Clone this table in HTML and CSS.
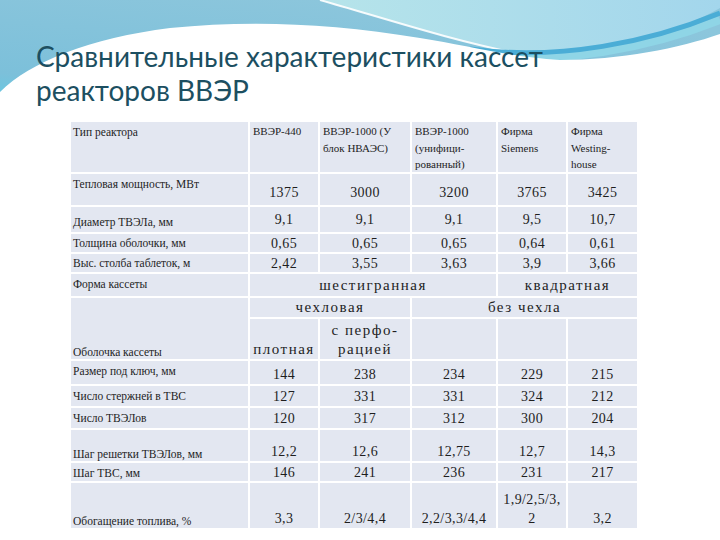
FILE: index.html
```html
<!DOCTYPE html>
<html lang="ru">
<head>
<meta charset="utf-8">
<title>Сравнительные характеристики кассет реакторов ВВЭР</title>
<link rel="stylesheet" href="styles.css">
</head>
<body>
<div class="slide">
  <svg class="bg" width="720" height="130" viewBox="0 0 720 130" aria-hidden="true">
    <defs>
      <linearGradient id="gBase" x1="0" y1="1" x2="0.5" y2="0">
        <stop offset="0" stop-color="#4fd3ea"/>
        <stop offset="0.35" stop-color="#7cc0da"/>
        <stop offset="1" stop-color="#8cc6dc"/>
      </linearGradient>
      <linearGradient id="gLight" x1="0" y1="0" x2="1" y2="0">
        <stop offset="0" stop-color="#b6e4ea"/>
        <stop offset="1" stop-color="#a3d6ec"/>
      </linearGradient>
    </defs>
    <rect x="0" y="0" width="720" height="130" fill="url(#gBase)"/>
    <path d="M320,0 C390,20 450,40 520,54 C600,56 670,36 720,8 V0 Z" fill="url(#gLight)"/>
    <path d="M320,0 C390,20 450,40 520,54" fill="none" stroke="#ffffff" stroke-width="2" opacity="0.9"/>
    <path d="M470,54 C560,66 650,48 720,20" fill="none" stroke="#8fd5e6" stroke-width="8"/>
    <path d="M470,49 C560,61 650,42 720,13" fill="none" stroke="#4badd6" stroke-width="5"/>
    <path d="M0,92 C30,62 90,38 170,28 C250,20 330,23 420,38 C470,46 510,57 560,60 C620,60 680,48 720,34 V130 H0 Z" fill="#ffffff"/>
  </svg>

  <h1 class="title">Сравнительные характеристики кассет<br>реакторов ВВЭР</h1>

  <div class="table">
    <!-- row 1 -->
    <div class="c lbl top">Тип реактора</div>
    <div class="c hd">ВВЭР-440</div>
    <div class="c hd">ВВЭР-1000 (У<br>блок НВАЭС)</div>
    <div class="c hd">ВВЭР-1000<br>(унифици-<br>рованный)</div>
    <div class="c hd">Фирма<br>Siemens</div>
    <div class="c hd">Фирма<br>Westing-<br>house</div>

    <!-- row 2 -->
    <div class="c lbl top">Тепловая мощность, МВт</div>
    <div class="c num low">1375</div>
    <div class="c num low">3000</div>
    <div class="c num low">3200</div>
    <div class="c num low">3765</div>
    <div class="c num low">3425</div>

    <!-- row 3 -->
    <div class="c lbl low">Диаметр ТВЭЛа, мм</div>
    <div class="c num low">9,1</div>
    <div class="c num low">9,1</div>
    <div class="c num low">9,1</div>
    <div class="c num low">9,5</div>
    <div class="c num low">10,7</div>

    <!-- row 4 -->
    <div class="c lbl">Толщина оболочки, мм</div>
    <div class="c num">0,65</div>
    <div class="c num">0,65</div>
    <div class="c num">0,65</div>
    <div class="c num">0,64</div>
    <div class="c num">0,61</div>

    <!-- row 5 -->
    <div class="c lbl">Выс. столба таблеток, м</div>
    <div class="c num">2,42</div>
    <div class="c num">3,55</div>
    <div class="c num">3,63</div>
    <div class="c num">3,9</div>
    <div class="c num">3,66</div>

    <!-- row 6 -->
    <div class="c lbl top">Форма кассеты</div>
    <div class="c word span3">шестигранная</div>
    <div class="c word span2">квадратная</div>

    <!-- row 7 / 8 -->
    <div class="c lbl bot rspan2">Оболочка кассеты</div>
    <div class="c word span2">чехловая</div>
    <div class="c word span3">без чехла</div>
    <div class="c word bot">плотная</div>
    <div class="c word bot">с перфо-<br>рацией</div>
    <div class="c"></div>
    <div class="c"></div>
    <div class="c"></div>

    <!-- row 9 -->
    <div class="c lbl top">Размер под ключ, мм</div>
    <div class="c num bot">144</div>
    <div class="c num bot">238</div>
    <div class="c num bot">234</div>
    <div class="c num bot">229</div>
    <div class="c num bot">215</div>

    <!-- row 10 -->
    <div class="c lbl">Число стержней в ТВС</div>
    <div class="c num">127</div>
    <div class="c num">331</div>
    <div class="c num">331</div>
    <div class="c num">324</div>
    <div class="c num">212</div>

    <!-- row 11 -->
    <div class="c lbl">Число ТВЭЛов</div>
    <div class="c num">120</div>
    <div class="c num">317</div>
    <div class="c num">312</div>
    <div class="c num">300</div>
    <div class="c num">204</div>

    <!-- row 12 -->
    <div class="c lbl bot">Шаг решетки ТВЭЛов, мм</div>
    <div class="c num bot">12,2</div>
    <div class="c num bot">12,6</div>
    <div class="c num bot">12,75</div>
    <div class="c num bot">12,7</div>
    <div class="c num bot">14,3</div>

    <!-- row 13 -->
    <div class="c lbl top">Шаг ТВС, мм</div>
    <div class="c num">146</div>
    <div class="c num">241</div>
    <div class="c num">236</div>
    <div class="c num">231</div>
    <div class="c num">217</div>

    <!-- row 14 -->
    <div class="c lbl bot">Обогащение топлива, %</div>
    <div class="c num bot">3,3</div>
    <div class="c num bot">2/3/4,4</div>
    <div class="c num bot">2,2/3,3/4,4</div>
    <div class="c num bot">1,9/2,5/3,<br>2</div>
    <div class="c num bot">3,2</div>
  </div>
</div>
</body>
</html>
```
FILE: styles.css
```css
html, body {
  margin: 0;
  padding: 0;
  background: #ffffff;
}

.slide {
  position: relative;
  width: 720px;
  height: 540px;
  overflow: hidden;
  background: #ffffff;
}

.bg {
  position: absolute;
  left: 0;
  top: 0;
  z-index: 0;
}

.title {
  position: relative;
  z-index: 1;
  margin: 0;
  padding: 39px 0 0 36px;
  font-family: "Lato", "Open Sans", sans-serif;
  font-weight: 400;
  font-size: 28px;
  line-height: 34px;
  color: #1c4f61;
  letter-spacing: 0;
}

.table {
  position: relative;
  z-index: 1;
  margin: 15px 0 0 71px;
  width: 566px;
  display: grid;
  grid-template-columns: 177px 68px 90px 84px 68px 69px;
  grid-template-rows: 50px 31px 25px 18px 18px 22px 19px 40px 23px 20px 20px 31px 18px 45px;
  gap: 2px;
  font-family: "Liberation Serif", "DejaVu Serif", serif;
  color: #1e1e1e;
}

.c {
  background: #e3e7f1;
  display: flex;
  flex-direction: column;
  justify-content: center;
  overflow: visible;
  white-space: nowrap;
}

.lbl {
  font-size: 11.5px;
  line-height: 14px;
  padding-left: 2px;
}

.hd {
  font-size: 11px;
  line-height: 16.5px;
  justify-content: flex-start;
  padding: 1px 0 0 3px;
}

.num {
  font-size: 14px;
  line-height: 19px;
  text-align: center;
  letter-spacing: 0.4px;
}

.word {
  font-size: 15px;
  line-height: 19px;
  text-align: center;
  letter-spacing: 1.5px;
}

.top {
  justify-content: flex-start;
  padding-top: 3px;
}

.low {
  justify-content: flex-end;
  padding-bottom: 3px;
}

.bot {
  justify-content: flex-end;
  padding-bottom: 0;
}

.span2 { grid-column: span 2; }
.span3 { grid-column: span 3; }
.rspan2 { grid-row: span 2; }
```
